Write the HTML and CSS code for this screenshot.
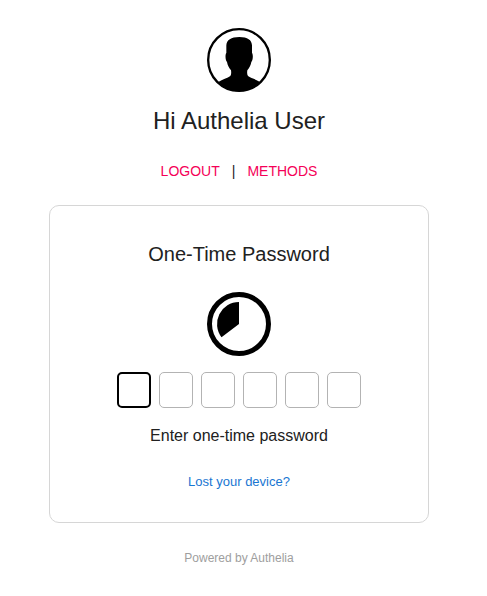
FILE: index.html
```html
<!DOCTYPE html>
<html lang="en">
<head>
<meta charset="utf-8">
<meta name="viewport" content="width=device-width, initial-scale=1">
<title>Login - Authelia</title>
<link rel="stylesheet" href="styles.css">
</head>
<body>
<main class="page">
  <svg class="avatar" viewBox="0 0 192 192" aria-hidden="true">
    <circle cx="96" cy="96" r="92.5" fill="#fff" stroke="#000" stroke-width="7"/>
    <path d="M34 162 C46 154 62 150 70 144 C73 140 73 134 72 127 C66 120 62 112 60 102 C55 98 54 79 58 75 L58 52 C59 36 72 27 97 27 C122 27 134 36 135 52 L135 75 C139 79 138 98 133 102 C131 112 127 120 121 127 C120 134 120 140 123 144 C131 150 147 154 159 162 C142 180 120 190 96 190 C72 190 50 180 34 162 Z"/>
  </svg>
  <h1 class="greeting">Hi Authelia User</h1>
  <nav class="actions">
    <button class="action" type="button">LOGOUT</button>
    <span class="divider">|</span>
    <button class="action" type="button">METHODS</button>
  </nav>
  <section class="card">
    <h2 class="title">One-Time Password</h2>
    <svg class="timer" viewBox="0 0 64 64" aria-hidden="true">
      <circle cx="32" cy="32" r="29.5" fill="none" stroke="#000" stroke-width="5"/>
      <path d="M32 32 L32 10 A22 22 0 0 0 14.5 45.3 Z"/>
    </svg>
    <div class="code">
      <input class="digit" type="tel" maxlength="1" aria-label="Digit 1">
      <input class="digit" type="tel" maxlength="1" aria-label="Digit 2">
      <input class="digit" type="tel" maxlength="1" aria-label="Digit 3">
      <input class="digit" type="tel" maxlength="1" aria-label="Digit 4">
      <input class="digit" type="tel" maxlength="1" aria-label="Digit 5">
      <input class="digit" type="tel" maxlength="1" aria-label="Digit 6">
    </div>
    <p class="hint">Enter one-time password</p>
    <a class="lost" href="#">Lost your device?</a>
  </section>
  <footer class="footer">Powered by Authelia</footer>
</main>
</body>
</html>
```
FILE: styles.css
```css
* {
  box-sizing: border-box;
}

body {
  margin: 0;
  background: #fff;
  color: #212121;
  font-family: "Liberation Sans", Arial, sans-serif;
}

.page {
  display: flex;
  flex-direction: column;
  align-items: center;
  padding: 28px 17px 24px 8px;
}

.avatar,
.timer {
  display: block;
  width: 64px;
  height: 64px;
}

.greeting {
  margin: 13px 0 0;
  font-size: 24px;
  font-weight: 400;
  line-height: 32px;
}

.actions {
  display: flex;
  align-items: center;
  gap: 12px;
  margin-top: 24px;
  font-size: 14px;
  line-height: 20px;
}

.action {
  padding: 0;
  border: 0;
  background: none;
  color: #f50057;
  font: inherit;
  cursor: pointer;
}

.card {
  display: flex;
  flex-direction: column;
  align-items: center;
  width: 100%;
  max-width: 380px;
  margin-top: 24px;
  padding: 32px 24px 30px;
  border: 1px solid #d6d6d6;
  border-radius: 10px;
}

.title {
  margin: 0 0 22px;
  font-size: 20px;
  font-weight: 400;
  line-height: 32px;
}

.code {
  display: flex;
  gap: 8px;
  margin-top: 16px;
}

.digit {
  width: 34px;
  height: 36px;
  padding: 0;
  border: 1px solid #b3b3b3;
  border-radius: 5px;
  background: #fff;
  font: inherit;
  text-align: center;
  outline: none;
}

.digit:first-child {
  border: 2px solid #000;
}

.hint {
  margin: 16px 0 0;
  font-size: 16px;
  line-height: 24px;
}

.lost {
  margin-top: 24px;
  color: #1976d2;
  font-size: 13px;
  line-height: 20px;
  text-decoration: none;
}

.footer {
  margin-top: 25px;
  color: #9e9e9e;
  font-size: 12px;
  line-height: 20px;
}
```
